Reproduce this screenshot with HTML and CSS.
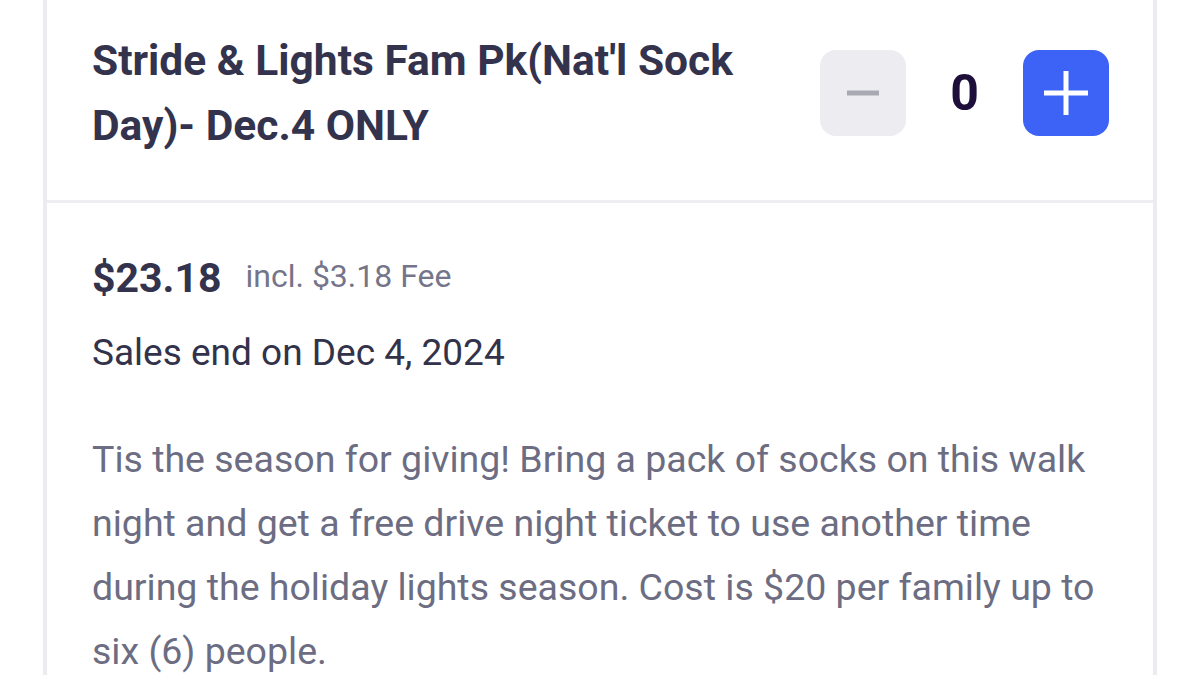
FILE: index.html
```html
<!DOCTYPE html>
<html lang="en">
<head>
<meta charset="utf-8">
<title>Ticket</title>
<link rel="stylesheet" href="styles.css">
</head>
<body>
<div class="card">
  <div class="ticket-head">
    <h2 class="ticket-title">Stride &amp; Lights Fam Pk(Nat'l Sock Day)- Dec.4 ONLY</h2>
    <div class="stepper">
      <button class="step-btn minus" aria-label="Decrease">
        <svg width="32" height="6" viewBox="0 0 32 6"><rect x="0" y="0.5" width="32" height="5" fill="#a9a9b4"/></svg>
      </button>
      <span class="count">0</span>
      <button class="step-btn plus" aria-label="Increase">
        <svg width="44" height="44" viewBox="0 0 44 44"><rect x="0" y="19.5" width="44" height="5" fill="#fff"/><rect x="19.5" y="0" width="5" height="44" fill="#fff"/></svg>
      </button>
    </div>
  </div>
  <div class="ticket-body">
    <div class="price-row">
      <span class="price">$23.18</span>
      <span class="fee">incl. $3.18 Fee</span>
    </div>
    <p class="sales-end">Sales end on Dec 4, 2024</p>
    <p class="desc">Tis the season for giving! Bring a pack of socks on this walk night and get a free drive night ticket to use another time during the holiday lights season. Cost is $20 per family up to six (6) people.</p>
  </div>
</div>
</body>
</html>
```
FILE: styles.css
```css
html, body {
  margin: 0;
  padding: 0;
  background: #ffffff;
}
body {
  height: 675px;
  font-family: Roboto, "Liberation Sans", sans-serif;
  overflow: hidden;
}
.card {
  box-sizing: border-box;
  margin-left: 43px;
  width: 1114px;
  min-height: 675px;
  border-left: 4px solid #ebebf0;
  border-right: 4px solid #ebebf0;
  background: #fff;
}
.ticket-head {
  display: flex;
  align-items: center;
  gap: 40px;
  padding: 28px 44px 42px 45px;
  border-bottom: 3px solid #ededf2;
}
.ticket-title {
  flex: 1;
  margin: 0;
  font-size: 42.5px;
  line-height: 65px;
  font-weight: 700;
  color: #34334e;
}
.stepper {
  display: flex;
  align-items: center;
}
.step-btn {
  width: 86px;
  height: 86px;
  border: none;
  border-radius: 16px;
  padding: 0;
  display: flex;
  align-items: center;
  justify-content: center;
}
.step-btn.minus { background: #ececf1; }
.step-btn.plus { background: #3d63f6; }
.count {
  width: 117px;
  text-align: center;
  font-size: 50px;
  font-weight: 700;
  color: #1d0f3a;
}
.ticket-body {
  padding: 51px 44px 0 45px;
}
.price-row {
  display: flex;
  align-items: center;
  gap: 24px;
}
.price {
  font-size: 41px;
  font-weight: 700;
  color: #34334e;
}
.fee {
  font-size: 32px;
  margin-bottom: 4px;
  color: #74758a;
}
.sales-end {
  margin: 29px 0 0;
  font-size: 37px;
  color: #33324b;
}
.desc {
  margin: 53px 0 0;
  font-size: 37.5px;
  line-height: 64px;
  color: #6c6d82;
}
```
